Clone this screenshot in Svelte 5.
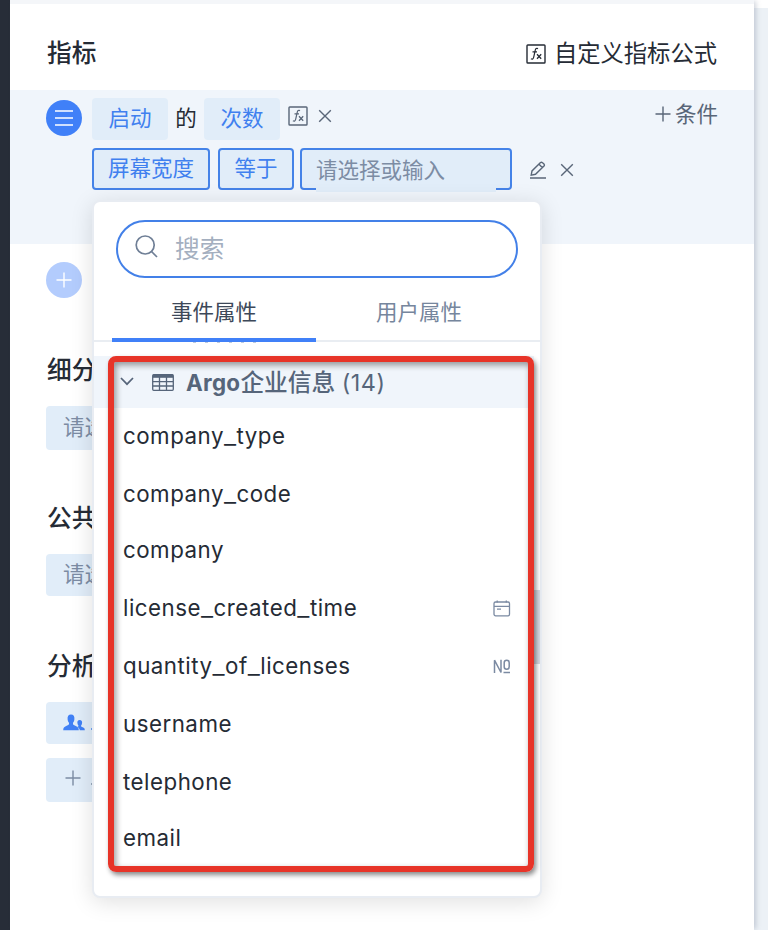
<script>
  const fields = [
    { name: 'company_type' },
    { name: 'company_code' },
    { name: 'company' },
    { name: 'license_created_time', kind: 'date' },
    { name: 'quantity_of_licenses', kind: 'number' },
    { name: 'username' },
    { name: 'telephone' },
    { name: 'email' }
  ];
</script>

{#snippet formula()}
  <svg class="fx" width="20" height="20" viewBox="0 0 20 20" fill="none" stroke="currentColor" stroke-width="1.4">
    <rect x="1" y="1" width="18" height="18" rx="0.8" />
    <path d="M12 4.6C10.6 3.9 9.6 4.5 9.2 6.4L7.7 13.2C7.3 15 6.4 15.6 4.9 14.8M6.5 7.8H11" stroke-width="1.2" />
    <path d="M11 10.3L15.2 14.7M15.2 10.3L11 14.7" stroke-width="1.3" />
  </svg>
{/snippet}

{#snippet cross()}
  <svg class="cross" width="14" height="14" viewBox="0 0 14 14" fill="none" stroke="currentColor" stroke-width="1.4">
    <path d="M1.2 1.2L12.8 12.8M12.8 1.2L1.2 12.8" />
  </svg>
{/snippet}

{#snippet plus()}
  <svg class="plus" width="16" height="16" viewBox="0 0 16 16" fill="none" stroke="currentColor" stroke-width="1.4">
    <path d="M8 0.5V15.5M0.5 8H15.5" />
  </svg>
{/snippet}

<div class="page">
  <aside class="rail"></aside>
  <main>
    <header>
      <h2>指标</h2>
      <div class="custom">{@render formula()}<span>自定义指标公式</span></div>
    </header>

    <section class="metric">
      <div class="row">
        <span class="circle">
          <svg width="18" height="16" viewBox="0 0 18 16" stroke="#fff" stroke-width="1.7"><path d="M0 1H18M0 8H18M0 15H18" /></svg>
        </span>
        <span class="tag event">启动</span>
        <span class="of">的</span>
        <span class="tag count">次数</span>
        <span class="tools">{@render formula()}{@render cross()}</span>
        <span class="add">{@render plus()}<span>条件</span></span>
      </div>
      <div class="row filters">
        <span class="tag outlined prop">屏幕宽度</span>
        <span class="tag outlined op">等于</span>
        <span class="tag outlined value"><span class="inner">请选择或输入</span></span>
        <span class="tools edit">
          <svg width="18" height="18" viewBox="0 0 18 18" fill="none" stroke="currentColor" stroke-width="1.4">
            <path d="M1 17H17M2.2 14.1L3 9.9L11.5 1.6Q12.5 0.8 13.5 1.7L15 3.1Q15.8 4.1 15 5L6.5 13.3ZM10 3.2L13.3 6.5" />
          </svg>
          {@render cross()}
        </span>
      </div>
    </section>

    <section class="more"><span class="circle pale">{@render plus()}</span></section>

    <section class="block first">
      <h2>细分</h2>
      <span class="tag muted">请选</span>
    </section>
    <section class="block second">
      <h2>公共</h2>
      <span class="tag muted">请选</span>
    </section>
    <section class="block third">
      <h2>分析</h2>
      <span class="tag subject">
        <svg width="22" height="17" viewBox="0 0 22 17" fill="#4080f5">
          <path d="M8 .5C5.4.5 4.3 2.5 4.6 5.2C4.8 7 5.4 8.1 6 8.8C6.2 10.7 5.7 11 3.2 12C1.2 12.8.3 13.7.2 16.2H15.8C15.7 13.7 14.8 12.8 12.8 12C10.3 11 9.8 10.7 10 8.8C10.6 8.1 11.2 7 11.4 5.2C11.7 2.5 10.6.5 8 .5Z" />
          <path d="M16.7 6C14.8 6 14.2 7.4 14.4 9C14.5 10.2 14.9 11 15.4 11.5C15.5 12.4 15.2 12.6 14.2 13C15.7 13.7 16.6 14.7 16.8 16.2H21.8C21.8 14.4 21.1 13.8 19.8 13.3C18.2 12.7 18 12.5 18.1 11.5C18.6 11 19 10.2 19.1 9C19.3 7.4 18.6 6 16.7 6Z" />
        </svg>
        <i class="stroke"></i>
      </span>
      <span class="tag muted addition">{@render plus()}<i class="stroke"></i></span>
    </section>
  </main>
  <aside class="gutter"></aside>

  <div class="dropdown">
    <div class="search">
      <svg width="24" height="24" viewBox="0 0 24 24" fill="none" stroke="#6f7f96" stroke-width="1.7">
        <circle cx="10.2" cy="10" r="9" /><path d="M16.5 16.5L22 22" />
      </svg>
      <span>搜索</span>
    </div>
    <nav>
      <span class="active">事件属性</span>
      <span>用户属性</span>
    </nav>
    <div class="list">
      <div class="residue"></div>
      <div class="group">
        <svg class="chevron" width="14" height="9" viewBox="0 0 14 9" fill="none" stroke="currentColor" stroke-width="1.7"><path d="M1 1L7 7.2L13 1" /></svg>
        <svg class="table" width="22" height="17" viewBox="0 0 22 17" fill="none" stroke="currentColor" stroke-width="1.3">
          <rect x=".7" y=".7" width="20.6" height="15.6" rx="1" />
          <path d="M1 2.2H21" stroke-width="3.2" /><path d="M1 7.7H21M1 12H21M7.5 3V16M14.5 3V16" />
        </svg>
        <span class="name"><b>Argo<span class="cn">企业信息</span></b> <span class="total">(14)</span></span>
      </div>
      <div class="fields">
        {#each fields as field}
          <div class="field">
            <span>{#each field.name.split('_') as part, i}{#if i > 0}<span class="bar">_</span>{/if}{part}{/each}</span>
            {#if field.kind === 'date'}
              <svg width="18" height="17" viewBox="0 0 18 17" fill="none" stroke="#7b8aa2" stroke-width="1.3">
                <rect x="1" y="2" width="15.5" height="13.8" rx="1.6" /><path d="M1 6.3H16.5M4.2 .4V2.5M13.3 .4V2.5M4 9.2H8" />
              </svg>
            {:else if field.kind === 'number'}
              <svg width="18" height="15" viewBox="0 0 18 15" fill="none" stroke="#7b8aa2" stroke-width="1.5">
                <path d="M1.5 14V1.2L8 13.5V.8M10.5 13.5H17" /><rect x="11.2" y="1.2" width="5" height="9" rx="2.5" />
              </svg>
            {/if}
          </div>
        {/each}
      </div>
      <div class="thumb"></div>
    </div>
    <div class="marker"></div>
  </div>
</div>

<style>
  :global(body) { margin: 0; overflow: hidden; }
  .page {
    position: relative;
    display: flex;
    width: 768px;
    height: 930px;
    overflow: hidden;
    background: #fff;
    color: #252b35;
    font-family: Inter, "Noto Sans CJK SC", sans-serif;
    font-size: 21.5px;
    line-height: 32px;
    white-space: nowrap;
  }
  .page * { box-sizing: border-box; }
  svg { display: block; flex: none; }
  .rail { width: 10px; background: #272d38; }
  main { width: 744px; border-top: 4px solid #f4f6f9; background: #fff; box-shadow: 3px 0 5px -1px #65748b50; z-index: 1; }
  .gutter { width: 14px; background: #ecf1f6; border-top: 8px solid #fff; }
  h2 { margin: 0; font-size: 24.7px; font-weight: 500; line-height: 36px; }
  header { display: flex; justify-content: space-between; align-items: center; height: 86px; padding: 0 37px 0 37px; }
  header h2 { margin-top: 12px; }
  .custom { display: flex; gap: 8px; align-items: center; font-size: 23.3px; margin-top: 13px; }
  .metric { height: 154px; padding: 8px 36px 0 36px; background: #f0f5fb; color: #596678; }
  .row { display: flex; height: 42px; }
  .circle { display: flex; justify-content: center; align-items: center; width: 36px; height: 36px; border-radius: 50%; background: #4080f8; margin: 2px 10px 0 0; flex: none; }
  .tag { display: flex; justify-content: center; align-items: center; height: 42px; padding-bottom: 2px; border-radius: 4px; background: #e1edf9; color: #4080ef; flex: none; }
  .event, .count, .op { width: 76px; }
  .of { width: 36px; color: #252b35; text-align: center; line-height: 40px; }
  .tools { display: flex; align-items: center; gap: 10px; height: 36px; margin-left: 8px; }
  .add { display: flex; align-items: center; gap: 4px; height: 32px; margin-left: auto; }
  .filters { margin-top: 8px; padding-left: 46px; }
  .outlined { border: 2px solid #4583e8; }
  .prop { width: 118px; margin-right: 8px; }
  .op { margin-right: 6px; }
  .inner { width: 180px; height: 40px; line-height: 37px; background: #e1edf9; margin: 2px 0 0; }
  .value { width: 212px; padding-bottom: 0; color: #7c8ca4; align-items: flex-start; }
  .edit { height: 44px; margin-left: 17px; gap: 13px; }
  .more { height: 108px; padding: 16px 36px; }
  .pale { background: #b3ccfd; color: #fff; }
  .block { padding-left: 36px; height: 148px; }
  .block h2 { padding-left: 1px; margin-bottom: 18px; }
  .tag.muted, .subject { width: 46px; overflow: hidden; border-radius: 4px 0 0 4px; justify-content: flex-start; padding-left: 17px; color: #7c8ca4; }
  .first .tag { height: 44px; }
  .subject { padding-left: 17px; gap: 6px; color: #4080ef; }
  .block .addition { height: 44px; margin-top: 14px; padding: 0 0 5px 19px; gap: 10px; }
  .stroke { width: 2px; height: 2px; margin-top: 13px; background: currentColor; opacity: 0.7; flex: none; }
  .dropdown {
    position: absolute;
    z-index: 2;
    left: 92px;
    top: 200px;
    width: 450px;
    height: 698px;
    border: 2px solid #e8ecf2;
    border-radius: 8px;
    background: #fff;
    box-shadow: 0 4px 22px #00000020;
  }
  .search { display: flex; align-items: center; gap: 16px; width: 402px; height: 58px; margin: 18px 22px 0; padding: 0 17px; border: 2px solid #4380e8; border-radius: 29px; font-size: 24.7px; color: #a4afbf; }
  .search svg { margin-top: -4px; }
  nav { display: flex; height: 64px; padding: 0 18px; border-bottom: 2px solid #e9edf2; color: #76869d; }
  nav span { width: 206px; height: 64px; padding-top: 18px; text-align: center; flex: none; }
  nav .active { width: 204px; color: #3d4859; border-bottom: 4px solid #4080f8; }
  .list { position: relative; padding-top: 14px; }
  .residue { position: absolute; left: 99px; top: 0; width: 70px; height: 1px; background: repeating-linear-gradient(90deg, #bfcbdc 0 3px, transparent 3px 12px); }
  .group { display: flex; align-items: center; height: 52px; margin-right: 6px; padding-left: 26px; background: #f0f5fb; color: #56657a; }
  .chevron { margin: -2px 18px 0 0; }
  .table { margin-right: 12px; }
  .name { font-size: 22.4px; letter-spacing: 0.3px; padding-top: 2px; }
  .name b { font-weight: 700; }
  .cn { font-size: 23.7px; letter-spacing: 0; font-weight: 500; }
  .total { font-size: 23.4px; letter-spacing: 0.5px; }
  .fields { display: grid; grid-template-rows: 56px 60px 52px 64px 52px 64px 52px 60px; font-size: 22.3px; letter-spacing: 0.5px; }
  .bar { font-size: 27px; font-weight: 300; line-height: 0; }
  .field { display: flex; justify-content: space-between; align-items: center; padding: 0 29px 0 29px; }
  .thumb { position: absolute; right: 0; top: 248px; width: 6px; height: 74px; background: #d6dae2; }
  .marker { position: absolute; left: 14px; top: 154px; width: 426px; height: 516px; border: 6px solid #e73428; border-radius: 8px; box-shadow: 2px 3px 5px #0007, inset 2px 3px 6px #0006; }
</style>
